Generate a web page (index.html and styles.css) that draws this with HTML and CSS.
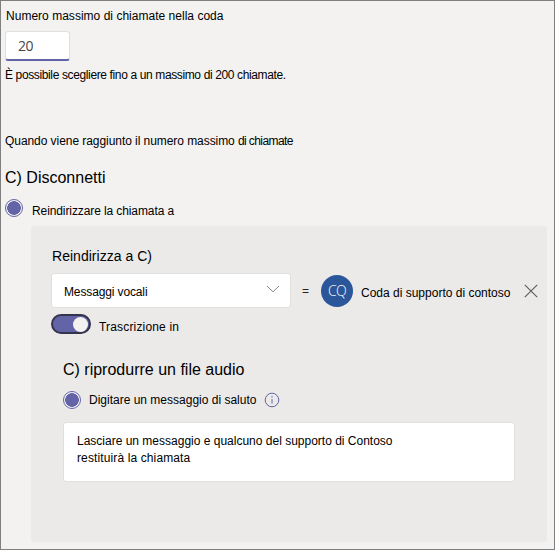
FILE: index.html
```html
<!DOCTYPE html>
<html lang="it">
<head>
<meta charset="utf-8">
<title>Coda di chiamata</title>
<link rel="stylesheet" href="styles.css">
</head>
<body>
<main class="page">
  <label class="text label-max" for="max">Numero massimo di chiamate nella coda</label>
  <input class="number" id="max" type="text" value="20">
  <p class="text hint">È possibile scegliere fino a un massimo di 200 chiamate.</p>
  <p class="text overflow-label">Quando viene raggiunto il numero massimo <span class="tight">di chiamate</span></p>
  <h2 class="heading disconnect">C) Disconnetti</h2>
  <div class="radio-row redirect">
    <span class="radio"></span>
    <span class="text redirect-text">Reindirizzare la chiamata a</span>
  </div>
  <section class="panel">
    <h3 class="subheading">Reindirizza a C)</h3>
    <div class="target-row">
      <div class="select">
        <span class="text select-text">Messaggi vocali</span>
        <svg class="chevron" width="14" height="8" viewBox="0 0 14 8"><path d="M1 1l6 5.8L13 1"/></svg>
      </div>
      <span class="equals">=</span>
      <span class="avatar">CQ</span>
      <span class="text account">Coda di supporto di contoso</span>
      <svg class="close" width="14" height="14" viewBox="0 0 14 14"><path d="M.8.8l12.4 12.4M13.2.8L.8 13.2"/></svg>
    </div>
    <div class="toggle-row">
      <span class="toggle"><span class="knob"></span></span>
      <span class="text toggle-text">Trascrizione in</span>
    </div>
    <div class="greeting">
      <h2 class="heading audio">C) riprodurre un file audio</h2>
      <div class="radio-row">
        <span class="radio"></span>
        <span class="text greeting-text">Digitare un messaggio di saluto</span>
        <svg class="info" width="16" height="16" viewBox="0 0 16 16"><circle cx="8" cy="8" r="6.8"/><path d="M8 7v4.5M8 4v1.5"/></svg>
      </div>
      <div class="message">
        <p class="text line-one">Lasciare un messaggio e qualcuno del supporto di Contoso</p>
        <p class="text line-two">restituirà la chiamata</p>
      </div>
    </div>
  </section>
</main>
</body>
</html>
```
FILE: styles.css
```css
* { box-sizing: border-box; }

body {
  margin: 0;
  background: #f3f2f1;
  color: #000;
  font-family: "Liberation Sans", Arial, sans-serif;
}

p, h2, h3 { margin: 0; font-weight: 400; }

.page {
  display: flex;
  flex-direction: column;
  align-items: flex-start;
  height: 550px;
  padding: 7px 7px 0 4px;
  border: 1px solid #7f7f7f;
}

.text {
  font-size: 12px;
  line-height: 16px;
  white-space: nowrap;
}

.label-max { margin-left: 1px; letter-spacing: .02px; }

.number {
  width: 65px;
  height: 30px;
  margin-top: 7px;
  padding: 0 12px;
  border: 1px solid #e1dfdd;
  border-bottom: 2px solid #6264a7;
  border-radius: 3px;
  background: #fff;
  color: #484644;
  font: 14px "Open Sans", sans-serif;
  letter-spacing: -.5px;
}

.hint { margin-top: 6px; letter-spacing: -.37px; }
.overflow-label { margin-top: 50px; letter-spacing: -.06px; }
.tight { letter-spacing: -.6px; }

.heading { font-size: 16px; line-height: 20px; white-space: nowrap; }
.disconnect { margin-top: 19px; }

.radio-row { display: flex; align-items: center; height: 18px; }
.redirect { margin-top: 11px; }
.redirect-text { margin: 5px 0 0 9px; letter-spacing: -.1px; }

.radio {
  flex: none;
  width: 18px;
  height: 18px;
  border: 1px solid #6264a7;
  border-radius: 50%;
  background: radial-gradient(circle, #6264a7 6.5px, #f3f2f1 7.1px);
}

.panel {
  align-self: stretch;
  height: 316px;
  margin: 9px 0 0 26px;
  padding: 20px 0 0 20px;
  border-radius: 3px;
  background: #ebeae9;
}

.subheading {
  margin-left: 1px;
  font-size: 14px;
  line-height: 20px;
  letter-spacing: .03px;
  white-space: nowrap;
}

.target-row { display: flex; align-items: center; margin-top: 7px; height: 35px; }

.select {
  display: flex;
  align-items: center;
  justify-content: space-between;
  width: 240px;
  height: 35px;
  padding: 0 10px 0 12px;
  border: 1px solid #e1dfdd;
  border-radius: 3px;
  background: #fff;
}

.select-text { padding-top: 2px; letter-spacing: -.13px; }

.chevron, .close, .info { flex: none; fill: none; }
.chevron { margin-bottom: 3px; stroke: #8a8886; }

.equals { width: 8px; margin-left: 11px; font-size: 12px; color: #252423; }

.avatar {
  display: flex;
  align-items: center;
  justify-content: center;
  width: 32px;
  height: 32px;
  margin-left: 11px;
  padding-bottom: 1px;
  border-radius: 50%;
  background: #2b579a;
  color: #fff;
  font: 300 14px "Open Sans", sans-serif;
  letter-spacing: -.6px;
}

.account { margin-left: 8px; padding-top: 5px; }
.close { margin-left: 14px; stroke: #605e5c; stroke-width: 1.2; }

.toggle-row { display: flex; height: 20px; margin-top: 6px; }

.toggle {
  display: flex;
  align-items: center;
  justify-content: flex-end;
  width: 40px;
  height: 20px;
  padding-right: 1px;
  border: 2px solid #33344a;
  border-radius: 10px;
  background: #6264a7;
}

.knob { width: 15px; height: 15px; border-radius: 50%; background: #f3f2f1; }
.toggle-text { margin: 5px 0 0 8px; letter-spacing: .17px; }

.greeting { margin: 26px 0 0 12px; }
.greeting .radio-row { margin-top: 11px; }
.greeting-text { margin-left: 8px; }
.info { margin-left: 8px; stroke: #6264a7; stroke-width: 1; }

.message {
  width: 452px;
  height: 60px;
  margin-top: 13px;
  padding: 10px 13px;
  border: 1px solid #e1dfdd;
  border-radius: 3px;
  background: #fff;
}

.message .text { line-height: 17px; }
.line-two { letter-spacing: .12px; }
```
